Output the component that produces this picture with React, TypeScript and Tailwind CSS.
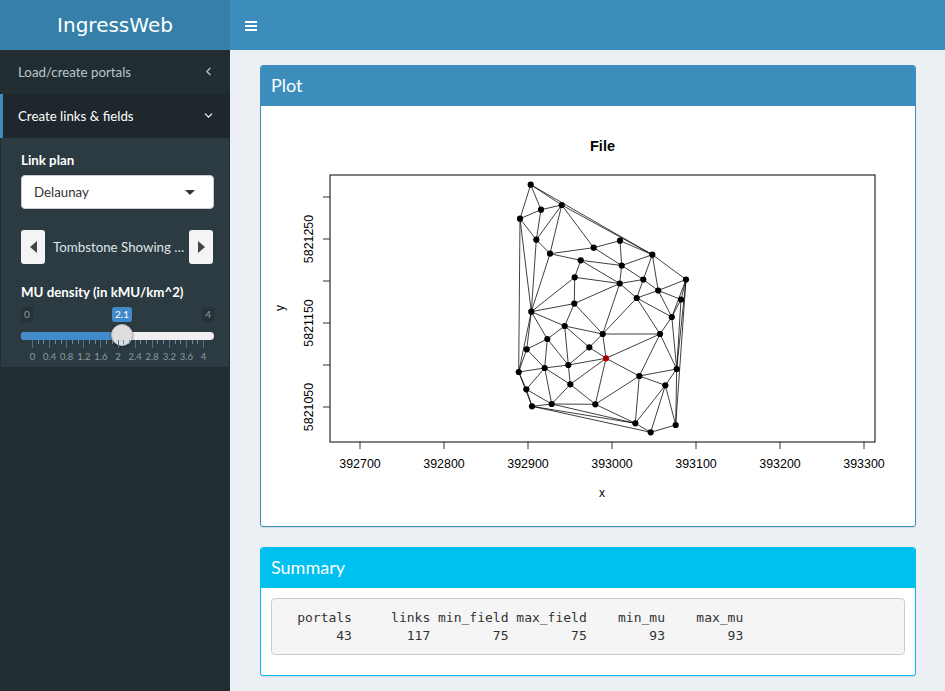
import { ChevronDown, ChevronLeft } from "lucide-react";

// portal positions, read off the plot (page pixels)
const nodes: Record<string, [number, number]> = {
  A: [530.7, 184.7], B: [541, 209.7], C: [561.7, 205], D: [520, 218.7], E: [536.3, 239.7],
  F: [550, 253.7], G: [593.7, 247.7], H: [620, 240.7], I: [652.3, 254.7], J: [580.7, 260.3],
  K: [621.7, 265.5], L: [574.7, 277.3], M: [643.3, 279.5], N: [686, 279.5], O: [619.7, 283.5],
  P: [658.2, 290.5], Q: [636.7, 298], R: [681, 299.5], S: [574.3, 303.6], T: [531.3, 311.7],
  U: [671.8, 317], V: [602.7, 334], W: [660, 334], X: [564.7, 326], Y: [547.3, 339],
  Z: [589.3, 347.3], a: [526.7, 349.3], b: [676.7, 369], c: [518.7, 372], d: [544.7, 368],
  e: [568.3, 365], f: [639.3, 376], g: [665.3, 385.3], h: [570.3, 384.3], i: [526.3, 389.3],
  j: [532, 406.3], k: [551.7, 404], l: [595.3, 404.3], m: [635.3, 423.3], n: [675.7, 425],
  o: [650.7, 432.3], z: [606, 358.3],
};

const edges =
  "AB AD AC AI BC BD BE CE CF CG CI DE DT Dc EF ET FT FG FJ GK GH HK HI IK IM IP IN KM KJ KO JO JL LO LT LS OM OQ OS OV MQ MP PQ PN PR PU NR NU Nb Nn RU Rb QU QW QV SV ST SX UW Ub Wz Wb Wf WV VX VZ Vz XT XY Xe XZ TY Ta Tc Ya Yd Ye Ze Zz ac ad ez ed eh dc dh di dk ci cj ij ik zh zf zl fb fg fm fl gb gm gn go bn hk hl kj kl km jm jo lm mo on".split(" ");

const xTicks = [
  [360, "392700"], [444, "392800"], [528, "392900"], [612, "393000"],
  [696, "393100"], [780, "393200"], [864, "393300"],
] as const;
const yTicks = [197, 239, 281, 323, 365, 407];
const yLabels = [
  [239, "5821250"], [323, "5821150"], [407, "5821050"],
] as const;

function Plot() {
  return (
    <svg viewBox="271 116 634 400" className="block w-full h-[400px]">
      <g fontFamily="'Liberation Sans', sans-serif" fill="#000">
        <text x="602.5" y="151" textAnchor="middle" fontSize="14.5" fontWeight="bold">File</text>
        <text x="602" y="497" textAnchor="middle" fontSize="12">x</text>
        <text transform="translate(284 308) rotate(-90)" textAnchor="middle" fontSize="12">y</text>
        {xTicks.map(([x, t]) => (
          <text key={t} x={x} y="468" textAnchor="middle" fontSize="12.4">{t}</text>
        ))}
        {yLabels.map(([y, t]) => (
          <text key={t} transform={`translate(313 ${y}) rotate(-90)`} textAnchor="middle" fontSize="12.4">{t}</text>
        ))}
      </g>
      <rect x="330" y="175" width="545" height="267" fill="none" stroke="#000" strokeWidth="1" />
      {xTicks.map(([x]) => (
        <line key={x} x1={x} x2={x} y1="442" y2="449" stroke="#000" strokeWidth="0.8" />
      ))}
      {yTicks.map((y) => (
        <line key={y} x1="323" x2="330" y1={y} y2={y} stroke="#000" strokeWidth="0.8" />
      ))}
      {edges.map((p) => {
        const [a, b] = [nodes[p[0]], nodes[p[1]]];
        return <line key={p} x1={a[0]} y1={a[1]} x2={b[0]} y2={b[1]} stroke="#000" strokeWidth="0.75" />;
      })}
      {Object.entries(nodes).map(([k, [x, y]]) => (
        <circle key={k} cx={x} cy={y} r="3.1" fill={k === "z" ? "#d00000" : "#000"} />
      ))}
      <path d="M604 356.3l4 4M608 356.3l-4 4" stroke="#300" strokeWidth="0.8" />
    </svg>
  );
}

const gridLabels = ["0", "0.4", "0.8", "1.2", "1.6", "2", "2.4", "2.8", "3.2", "3.6", "4"];

function MuSlider() {
  return (
    <div className="relative h-[60px] mt-[7px]">
      <span className="absolute left-0 top-0 h-[15px] px-[3px] rounded-[3px] bg-[#263238] text-[10px] leading-[15px] text-[#8b9aa1]">0</span>
      <span className="absolute right-0 top-0 h-[15px] px-[3px] rounded-[3px] bg-[#263238] text-[10px] leading-[15px] text-[#8b9aa1]">4</span>
      <span className="absolute left-[91px] top-0 h-[15px] px-[3px] rounded-[3px] bg-[#428bca] text-[10px] leading-[15px] text-white">2.1</span>
      <div className="absolute left-0 right-0 top-[25px] h-2 rounded-full bg-[#f0f0f0] overflow-hidden">
        <div className="h-full w-[101px] bg-[#428bca]" />
      </div>
      <div className="absolute left-[90px] top-[17px] w-[22px] h-[22px] rounded-full bg-[#dedede] border border-[#bbb] shadow-[0_1px_3px_rgba(0,0,0,0.4)]" />
      <svg className="absolute left-0 top-[33px]" width="193" height="10">
        {Array.from({ length: 31 }, (_, i) => {
          const x = Math.round(11 + (i * 171) / 30) + 0.5;
          const major = i % 3 === 0;
          return <line key={i} x1={x} x2={x} y1="0" y2={major ? 8 : 4} stroke={major ? "#3b78a6" : "#74868e"} strokeWidth="1" />;
        })}
      </svg>
      {gridLabels.map((t, i) => (
        <span
          key={t}
          className="absolute top-[44px] w-6 -ml-3 text-center text-[9.5px] leading-3 text-[#8b9aa1]"
          style={{ left: 11.5 + i * 17.1 }}
        >
          {t}
        </span>
      ))}
    </div>
  );
}

function Sidebar() {
  return (
    <aside className="w-[230px] shrink-0 bg-[#222d32] font-['Lato',sans-serif] text-[13.3px]">
      <div className="h-[50px] bg-[#367fa9] text-white text-[20px] leading-[50px] text-center font-['DejaVu_Sans',sans-serif]">
        IngressWeb
      </div>
      <div className="h-11 pl-[18px] pr-[15px] flex items-center justify-between text-[#b8c7ce]">
        <span className="pt-0.5">Load/create portals</span>
        <ChevronLeft size={13} strokeWidth={2.2} className="-mt-px" />
      </div>
      <div className="h-11 pl-[15px] pr-[15px] flex items-center justify-between border-l-[3px] border-[#3c8dbc] bg-[#1e282c] text-white">
        <span className="pt-0.5">Create links &amp; fields</span>
        <ChevronDown size={13} strokeWidth={2.2} className="-mt-px" />
      </div>
      <div className="h-[229px] ml-px mr-px bg-[#2c3b41] pl-5 pr-[15px] pt-[14px] text-white">
        <div className="font-bold leading-4">Link plan</div>
        <div className="mt-[7px] h-[34px] w-[193px] rounded bg-white border border-[#ccc] pl-3 pr-[18px] flex items-center justify-between text-[#333]">
          <span className="pt-0.5">Delaunay</span>
          <span className="w-0 h-0 border-x-[5px] border-x-transparent border-t-[5px] border-t-[#333]" />
        </div>
        <div className="mt-[21px] w-[192px] h-[34px] flex items-center">
          <button className="w-6 h-[34px] rounded-[3px] bg-[#f4f4f4] shrink-0 flex items-center justify-center">
            <span className="w-0 h-0 border-y-[6px] border-y-transparent border-r-[7px] border-r-[#444]" />
          </button>
          <span className="flex-1 min-w-0 pl-2 pt-0.5 whitespace-nowrap text-[#dfe5e8]">
            Tombstone Showing …
          </span>
          <button className="w-6 h-[34px] rounded-[3px] bg-[#f4f4f4] shrink-0 flex items-center justify-center">
            <span className="w-0 h-0 border-y-[6px] border-y-transparent border-l-[7px] border-l-[#444]" />
          </button>
        </div>
        <div className="mt-5 font-bold leading-4">MU density (in kMU/km^2)</div>
        <div className="w-[193px]">
          <MuSlider />
        </div>
      </div>
    </aside>
  );
}

function Card({ title, color, border, children }: { title: string; color: string; border: string; children: React.ReactNode }) {
  return (
    <section className={`rounded-[3px] border bg-white overflow-hidden shadow-[0_1px_1px_rgba(0,0,0,0.1)] ${border}`}>
      <h3 className={`h-10 pl-[10px] text-[18px] leading-[38px] text-white font-['Lato',sans-serif] ${color}`}>{title}</h3>
      <div className="p-[10px]">{children}</div>
    </section>
  );
}

export default function App() {
  return (
    <div className="h-screen overflow-hidden flex bg-[#ecf0f5]">
      <Sidebar />
      <div className="flex-1 min-w-0">
        <header className="h-[50px] bg-[#3c8dbc] flex items-center pl-[15px]">
          <span className="w-3 flex flex-col gap-[2px] mt-px">
            <i className="block h-[2px] bg-white" />
            <i className="block h-[2px] bg-white" />
            <i className="block h-[2px] bg-white" />
          </span>
        </header>
        <main className="pt-[15px] pl-[30px] pr-[29px] flex flex-col gap-5">
          <Card title="Plot" color="bg-[#3c8dbc]" border="border-[#3c8dbc]">
            <Plot />
          </Card>
          <Card title="Summary" color="bg-[#00c0ef]" border="border-[#00c0ef]">
            <pre className="mb-[10px] h-[57px] rounded border border-[#ccc] bg-[#f5f5f5] p-[9.5px] text-[13px] leading-[18.57px] text-[#333] font-['DejaVu_Sans_Mono',monospace]">
              {"  portals     links min_field max_field    min_mu    max_mu\n       43       117        75        75        93        93"}
            </pre>
          </Card>
        </main>
      </div>
    </div>
  );
}
